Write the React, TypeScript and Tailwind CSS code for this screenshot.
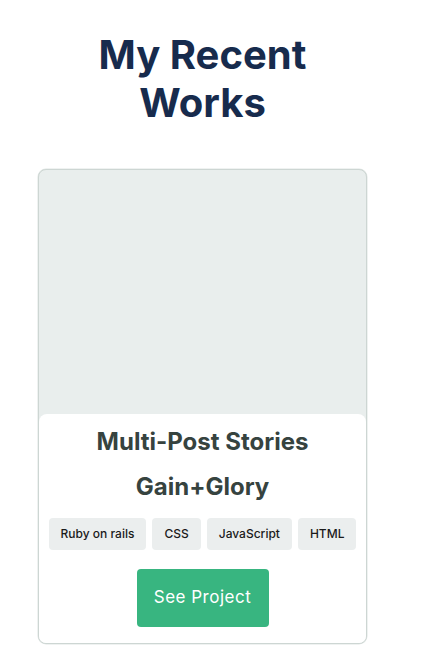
const tags = ['Ruby on rails', 'CSS', 'JavaScript', 'HTML'];

export default function App() {
  return (
    <div className="w-[405px] bg-white pt-[31px] pb-6 font-['Inter',sans-serif]">
      {/* Heading */}
      <h2 className="mx-auto w-[260px] text-center text-[40px] leading-[48px] font-bold text-[#172b4d]">
        My Recent Works
      </h2>

      {/* Project card */}
      <div className="mx-auto mt-[42px] w-[329px] overflow-hidden rounded-lg border border-[#cdd6d3] bg-[#e9eeed] shadow-[0_0_0_0.5px_#dfe5e3]">
        <div className="h-[244px]" />
        <div className="rounded-t-lg bg-white px-2 pt-[5px] pb-[16px] text-center">
          <h3 className="text-2xl leading-[45px] font-bold text-[#36433f]">Multi-Post Stories</h3>
          <h3 className="text-2xl leading-[45px] font-bold text-[#36433f]">Gain+Glory</h3>
          <ul className="mt-[9px] flex justify-center gap-[6px]">
            {tags.map((tag) => (
              <li
                key={tag}
                className="flex h-8 items-center rounded-[4px] bg-[#ebeeee] px-3 text-xs font-medium text-[#1a1a1a]"
              >
                {tag}
              </li>
            ))}
          </ul>
          <button className="mt-[19px] h-[58px] w-[132px] rounded-[4px] bg-[#38b580] text-[17px] tracking-[0.5px] text-white">
            See Project
          </button>
        </div>
      </div>
    </div>
  );
}
